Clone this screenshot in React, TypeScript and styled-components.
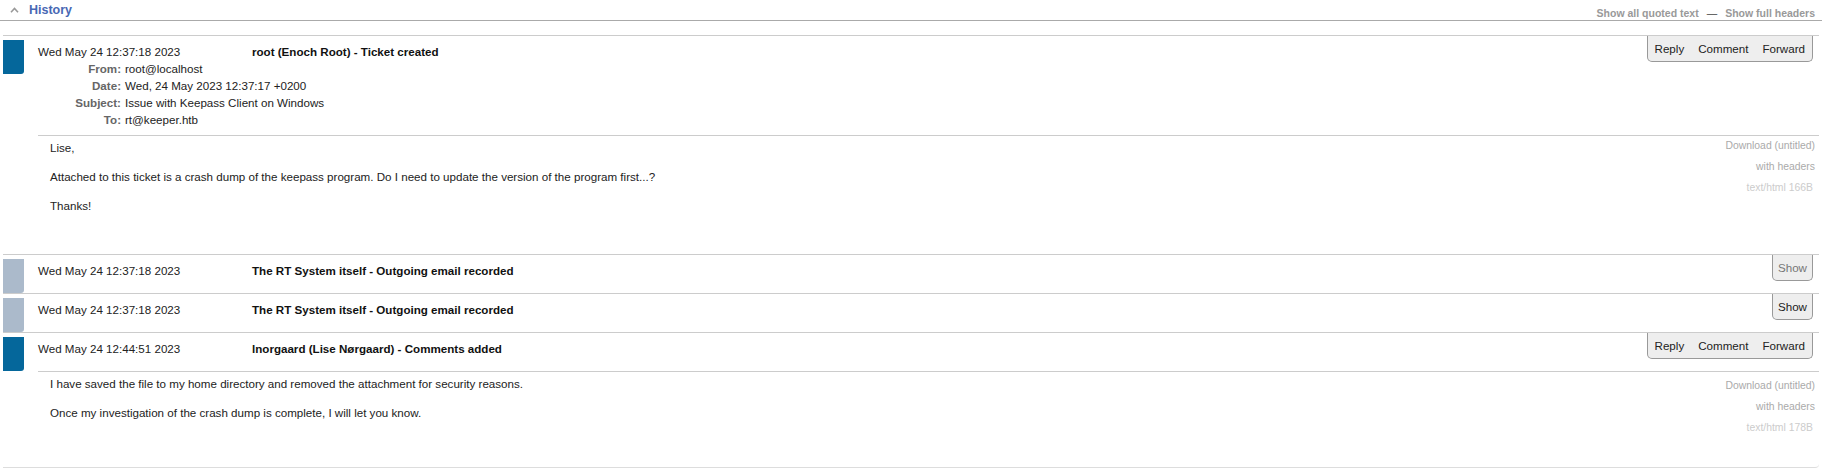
import React from 'react';
import styled, { createGlobalStyle } from 'styled-components';

const GlobalStyle = createGlobalStyle`
  body {
    margin: 0;
    background: #fff;
    font-family: "Liberation Sans", Arial, sans-serif;
    font-size: 11.6px;
    color: #222;
  }
`;

const TitleBar = styled.div`
  display: flex;
  align-items: center;
  height: 20px;
  padding: 0 7px 0 10px;
  border-bottom: 1px solid #aaa;
`;

const TitleText = styled.span`
  margin-left: 10px;
  font-size: 12.5px;
  font-weight: bold;
  line-height: 20px;
  color: #4868b4;
`;

const TitleLinks = styled.div`
  margin-left: auto;
  align-self: flex-end;
  font-size: 10.5px;
  font-weight: bold;
  line-height: 14px;
  color: #999;
`;

const Dash = styled.span`
  margin: 0 8px;
  color: #444;
  font-weight: normal;
`;

const History = styled.div`
  margin: 14px 3px 0 3px;
  padding-bottom: 2px;
  border-bottom: 1px solid #ddd;
  border-radius: 0 0 4px 0;
`;

const Transaction = styled.div`
  display: flex;
  align-items: flex-start;
  border-top: 1px solid #ccc;
`;

const Bar = styled.div<{ $color: string }>`
  flex: none;
  width: 21px;
  height: 34px;
  margin-top: 4px;
  border-radius: 0 0 3px 0;
  background: ${(p) => p.$color};
`;

const Main = styled.div`
  flex: 1;
  min-width: 0;
  margin-left: 14px;
`;

const TopRow = styled.div`
  display: flex;
  align-items: flex-start;
  height: 24px;
`;

const DateCell = styled.div`
  flex: none;
  width: 214px;
  padding-top: 8px;
  line-height: 16px;
`;

const Description = styled.div`
  padding-top: 8px;
  line-height: 16px;
  font-weight: bold;
  color: #111;
`;

const Actions = styled.div`
  margin-left: auto;
  margin-right: 6px;
  display: flex;
  height: 25px;
  background: #eee;
  border: 1px solid #999;
  border-top: none;
  border-radius: 0 0 5px 5px;
`;

const ActionLink = styled.span<{ $muted?: boolean; $tight?: boolean }>`
  padding: ${(p) => (p.$tight ? '0 5px' : '0 7px')};
  line-height: 25px;
  color: ${(p) => (p.$muted ? '#777' : '#222')};
`;

const Headers = styled.div`
  display: grid;
  grid-template-columns: 83px auto;
  column-gap: 4px;
  line-height: 17px;
`;

const HeaderLabel = styled.div`
  text-align: right;
  font-weight: bold;
  color: #666;
`;

const HeaderValue = styled.div`
  color: #222;
`;

const Body = styled.div<{ $gap: number }>`
  display: flex;
  margin-top: ${(p) => p.$gap}px;
  padding: 4px 0 27px 12px;
  border-top: 1px solid #ccc;
`;

const Message = styled.div`
  flex: 1;
`;

const Para = styled.p`
  margin: 0 0 13px;
  line-height: 16px;
`;

const Attachments = styled.div<{ $shift: number }>`
  padding: 0 4px 0 0;
  margin-top: ${(p) => p.$shift}px;
  text-align: right;
  font-size: 10.4px;
  line-height: 21px;
`;

const AttachLine = styled.div<{ $light?: boolean }>`
  color: ${(p) => (p.$light ? '#ccc' : '#aaa')};
  padding-right: ${(p) => (p.$light ? '2px' : '0')};
`;

const Chevron = () => (
  <svg width="9" height="6" viewBox="0 0 9 6">
    <path d="M1 5.2 L4.5 1.5 L8 5.2" stroke="#999" strokeWidth="1.6" fill="none" />
  </svg>
);

type Tx = {
  date: string;
  title: string;
  color: string;
  kind: 'full' | 'show';
  muted?: boolean;
  headers?: [string, string][];
  body?: string[];
  size?: string;
  shift?: number;
};

const transactions: Tx[] = [
  {
    date: 'Wed May 24 12:37:18 2023',
    title: 'root (Enoch Root) - Ticket created',
    color: '#05679b',
    kind: 'full',
    headers: [
      ['From:', 'root@localhost'],
      ['Date:', 'Wed, 24 May 2023 12:37:17 +0200'],
      ['Subject:', 'Issue with Keepass Client on Windows'],
      ['To:', 'rt@keeper.htb'],
    ],
    body: [
      'Lise,',
      'Attached to this ticket is a crash dump of the keepass program. Do I need to update the version of the program first...?',
      'Thanks!',
    ],
    size: '166B',
    shift: -5,
  },
  {
    date: 'Wed May 24 12:37:18 2023',
    title: 'The RT System itself - Outgoing email recorded',
    color: '#abbacb',
    kind: 'show',
    muted: true,
  },
  {
    date: 'Wed May 24 12:37:18 2023',
    title: 'The RT System itself - Outgoing email recorded',
    color: '#abbacb',
    kind: 'show',
  },
  {
    date: 'Wed May 24 12:44:51 2023',
    title: 'lnorgaard (Lise Nørgaard) - Comments added',
    color: '#05679b',
    kind: 'full',
    body: [
      'I have saved the file to my home directory and removed the attachment for security reasons.',
      'Once my investigation of the crash dump is complete, I will let you know.',
    ],
    size: '178B',
    shift: -1,
  },
];

function App() {
  return (
    <>
      <GlobalStyle />
      <TitleBar>
        <Chevron />
        <TitleText>History</TitleText>
        <TitleLinks>
          Show all quoted text<Dash>—</Dash>Show full headers
        </TitleLinks>
      </TitleBar>
      <History>
        {transactions.map((tx, i) => (
          <Transaction key={i}>
            <Bar $color={tx.color} />
            <Main>
              <TopRow>
                <DateCell>{tx.date}</DateCell>
                <Description>{tx.title}</Description>
                {tx.kind === 'full' ? (
                  <Actions>
                    <ActionLink>Reply</ActionLink>
                    <ActionLink>Comment</ActionLink>
                    <ActionLink>Forward</ActionLink>
                  </Actions>
                ) : (
                  <Actions>
                    <ActionLink $tight $muted={tx.muted}>Show</ActionLink>
                  </Actions>
                )}
              </TopRow>
              {tx.headers && (
                <Headers>
                  {tx.headers.map(([k, v]) => (
                    <React.Fragment key={k}>
                      <HeaderLabel>{k}</HeaderLabel>
                      <HeaderValue>{v}</HeaderValue>
                    </React.Fragment>
                  ))}
                </Headers>
              )}
              {tx.body && (
                <Body $gap={tx.headers ? 7 : 14}>
                  <Message>
                    {tx.body.map((line, j) => (
                      <Para key={j}>{line}</Para>
                    ))}
                  </Message>
                  <Attachments $shift={tx.shift ?? 0}>
                    <AttachLine>Download (untitled)</AttachLine>
                    <AttachLine>with headers</AttachLine>
                    <AttachLine $light>text/html {tx.size}</AttachLine>
                  </Attachments>
                </Body>
              )}
            </Main>
          </Transaction>
        ))}
      </History>
    </>
  );
}

export default App;
